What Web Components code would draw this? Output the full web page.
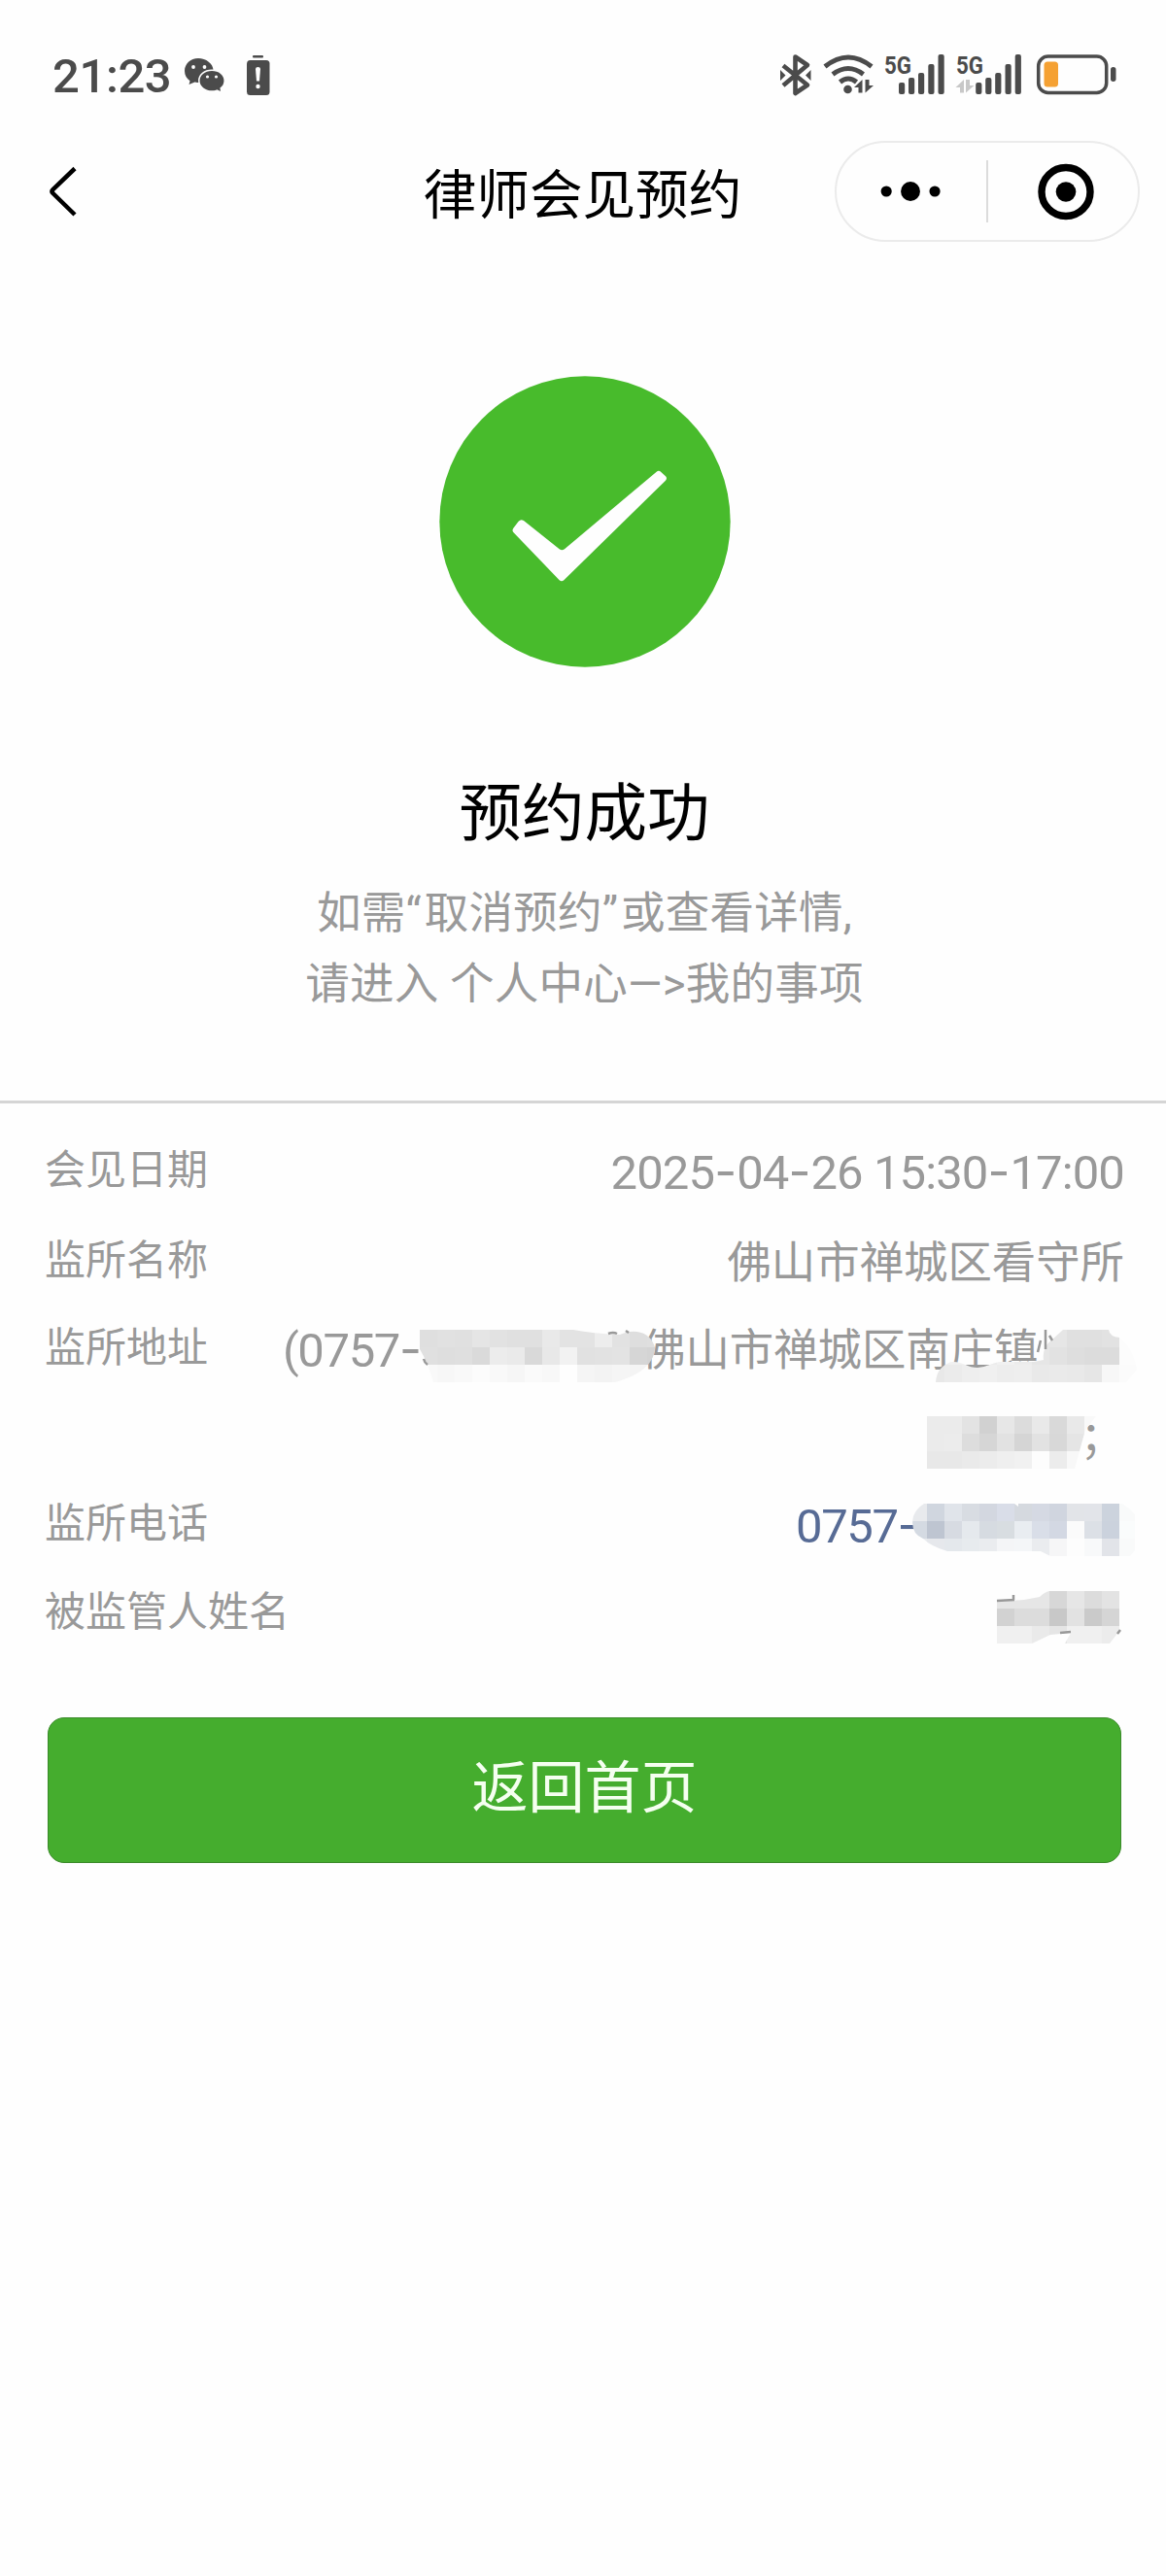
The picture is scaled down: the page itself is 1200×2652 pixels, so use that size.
<!DOCTYPE html>
<html lang="zh-CN">
<head>
<meta charset="utf-8">
<title>律师会见预约</title>
<style>
  body {
    margin: 0;
    background: #fefefe;
    font-family: Roboto, "Noto Sans CJK SC", sans-serif;
  }
</style>
</head>
<body>
<appointment-page></appointment-page>

<script>
/**
 * Phone status bar: clock and notification icons left, radio and battery icons right.
 */
class StatusBar extends HTMLElement {
  constructor() {
    super();
    this.attachShadow({ mode: "open" });
  }

  connectedCallback() {
    this.shadowRoot.innerHTML = `
      <style>
        :host {
          display: flex;
          justify-content: space-between;
          box-sizing: border-box;
          height: 130px;
          padding: 50px 50px 0 54px;
          color: #4b4b4b;
        }
        .left { display: flex; height: 54px; }
        time { width: 136px; font-size: 49px; font-weight: 500; line-height: 57px; letter-spacing: -.4px; }
        svg { display: block; height: 54px; }
      </style>
      <div class="left">
        <time>21:23</time>
        <svg width="90" viewBox="190 50 90 54" fill="currentColor">
          <path d="M204 60c-8 0-14 5.700-14 13 0 4.500 2.200 8 5.500 10.300L194.500 87l6-2.600c1.500.4 3.500.6 5 .6 8.500 0 14-5.500 14-12.500S212 60 204 60z"/>
          <path d="M218 72.300c-7.600 0-13.200 4.700-13.200 10.700S210.400 94 218 94c1.800 0 3.600-.3 5.200-.9l4.800 2-.8-4.200c2.600-2 4-4.800 4-8 0-6-5.600-10.600-13.200-10.600z" stroke="#fefefe" stroke-width="1.500"/>
          <g fill="#fefefe"><circle cx="199" cy="69" r="1.900"/><circle cx="210.500" cy="69" r="1.900"/><circle cx="213.500" cy="79" r="1.600"/><circle cx="222.500" cy="79" r="1.600"/></g>
          <rect x="260" y="57" width="11" height="2.600" rx="1"/>
          <rect x="254" y="62" width="23.500" height="36" rx="3.500"/>
          <path d="M263 71q0-2 2.500-2t2.500 2l-1 12.500h-3z" fill="#fefefe"/>
          <circle cx="265.500" cy="89" r="2.200" fill="#fefefe"/>
        </svg>
      </div>
      <svg width="350" viewBox="800 50 350 54" fill="currentColor">
        <path d="M806 67.500l25 20-12.500 8.500V58.500l12.500 8.500-25 21" fill="none" stroke="currentColor" stroke-width="4.600" stroke-linejoin="round"/>
        <path d="M803 72v11l5.500-5.500zM834.500 72v11l-5.500-5.500z"/>
        <g fill="none" stroke="currentColor" stroke-width="4.900">
          <path d="M849 68.500Q873 49.500 897 68.500"/>
          <path d="M857 76.500Q873 64.500 888.500 76.500"/>
          <path d="M864.500 84.500Q873 77.500 881.500 84.500"/>
        </g>
        <circle cx="872.500" cy="92" r="4.300"/>
        <path d="M879 90l8.500-8v13.500h-4v-5.500zM890.500 82h4v6h4.500l-8.500 7.500z"/>
        <g font-family="Roboto" font-weight="700" font-size="26.500">
          <text x="910" y="76" textLength="28" lengthAdjust="spacingAndGlyphs">5G</text>
          <text x="984" y="76" textLength="28" lengthAdjust="spacingAndGlyphs">5G</text>
        </g>
        <g id="bars">
          <rect x="925" y="85" width="6.200" height="12" rx="2"/>
          <rect x="935" y="80" width="6.200" height="17" rx="2"/>
          <rect x="945" y="75" width="6.200" height="22" rx="2"/>
          <rect x="955.300" y="66" width="6.200" height="31" rx="2"/>
          <rect x="965.500" y="56" width="6.200" height="41" rx="2"/>
        </g>
        <use href="#bars" x="79.200"/>
        <path d="M983.500 90l8.500-8v13.500h-4v-5.500zM994 82h4v6h4.500l-8.500 7.500z" fill="#c8c8c8"/>
        <rect x="1068.700" y="58" width="70" height="37.500" rx="10" fill="none" stroke="currentColor" stroke-width="3.500"/>
        <rect x="1074.500" y="63.500" width="14.500" height="26" rx="3.500" fill="#f5a133"/>
        <rect x="1143" y="69" width="5.500" height="15" rx="2.700"/>
      </svg>
    `;
  }
}
customElements.define("status-bar", StatusBar);

/**
 * Navigation bar with back arrow, slotted title and the mini program capsule.
 */
class NavBar extends HTMLElement {
  constructor() {
    super();
    this.attachShadow({ mode: "open" });
  }

  connectedCallback() {
    this.shadowRoot.innerHTML = `
      <style>
        :host {
          display: grid;
          grid-template-columns: 1fr auto 1fr;
          align-items: center;
          height: 134px;
          padding: 0 27px 0 48px;
        }
        .back { display: block; }
        h1 {
          margin: 0 11px 0 -11px;
          padding-top: 7px;
          font-size: 54.600px;
          font-weight: 400;
          line-height: 80px;
          color: #000;
        }
        .capsule {
          display: flex;
          align-items: center;
          justify-self: end;
          box-sizing: border-box;
          width: 314px;
          height: 104px;
          border: 2px solid #ebebeb;
          border-radius: 52px;
        }
        .capsule svg { flex: 1; height: 64px; }
        .capsule i { width: 2px; height: 64px; background: #dcdcdc; }
      </style>
      <svg class="back" width="32" height="54" viewBox="48 170 32 54">
        <path d="M77 173.500L54.500 195q-2 2 0 4L77 221" fill="none" stroke="#000" stroke-width="4.500"/>
      </svg>
      <h1><slot></slot></h1>
      <div class="capsule">
        <svg viewBox="861 165 155 64">
          <circle cx="912.500" cy="197" r="5.600"/><circle cx="937.500" cy="197" r="10"/><circle cx="962.700" cy="197" r="5.600"/>
        </svg>
        <i></i>
        <svg viewBox="1017 165 154 64">
          <circle cx="1097" cy="197.500" r="25" fill="none" stroke="#000" stroke-width="7.400"/>
          <circle cx="1097" cy="197.500" r="10.300"/>
        </svg>
      </div>
    `;
  }
}
customElements.define("nav-bar", NavBar);

/**
 * Success badge with a heading and slotted hint lines.
 */
class ResultPanel extends HTMLElement {
  constructor() {
    super();
    this.attachShadow({ mode: "open" });
  }

  connectedCallback() {
    this.shadowRoot.innerHTML = `
      <style>
        :host {
          display: flex;
          flex-direction: column;
          align-items: center;
          box-sizing: border-box;
          height: 872px;
          padding: 122.500px 0 0 3px;
          border-bottom: 3px solid #d5d5d5;
          text-align: center;
        }
        svg { display: block; flex: none; }
        h2 {
          margin: 103px 0 0;
          font-size: 64.500px;
          font-weight: 400;
          line-height: 96px;
          color: #000;
        }
        .hint {
          margin-top: 18px;
          font-size: 45.500px;
          line-height: 73px;
          letter-spacing: .25px;
          color: #999;
        }
      </style>
      <svg width="300" height="300" viewBox="65 49 900 900">
        <circle cx="515" cy="499" r="449" fill="#48bb2c"/>
        <path d="M310 498q7-8 16-2l110 88q8 6 16 0L736 345q7-6 14 1l14 13q6 6 0 13L450 680q-7 6-14 0L294 532q-5-6 0-13z" fill="#fefefe"/>
      </svg>
      <h2>${this.getAttribute("heading")}</h2>
      <div class="hint"><slot></slot></div>
    `;
  }
}
customElements.define("result-panel", ResultPanel);

/**
 * Pixelated cover for private data.
 * "cells" holds rows of colours split by "/", "shape" is the outline in pixels.
 */
class PixelMosaic extends HTMLElement {
  constructor() {
    super();
    this.attachShadow({ mode: "open" });
  }

  connectedCallback() {
    const size = 18;
    const rows = this.getAttribute("cells").split("/").map((row) => row.trim().split(" "));
    const width = Math.max(...rows.map((row) => row.length)) * size;
    const rects = rows.map((row, y) => row.map((c, x) => {
      const color = c.length === 2 ? c.repeat(3) : c;
      return `<rect x="${x * size}" y="${y * size}" width="${size}" height="${size}" fill="#${color}"/>`;
    }).join("")).join("");
    this.shadowRoot.innerHTML = `
      <style>
        :host { display: block; }
        svg { display: block; overflow: visible; }
      </style>
      <svg width="${width}" height="${rows.length * size}" shape-rendering="crispEdges">
        <clipPath id="shape"><path d="${this.getAttribute("shape")}"/></clipPath>
        <g clip-path="url(#shape)">${rects}</g>
        <path d="${this.getAttribute("strokes") || ""}" fill="none" stroke="#999" stroke-width="2.500" shape-rendering="auto"/>
      </svg>
    `;
  }
}
customElements.define("pixel-mosaic", PixelMosaic);

/**
 * One label and value line of the appointment details.
 */
class DetailRow extends HTMLElement {
  constructor() {
    super();
    this.attachShadow({ mode: "open" });
  }

  connectedCallback() {
    this.shadowRoot.innerHTML = `
      <style>
        :host {
          display: flex;
          justify-content: space-between;
          line-height: 90.800px;
          color: #999;
        }
        .label { font-size: 42px; white-space: nowrap; }
        .value {
          display: flex;
          flex-direction: column;
          align-items: flex-end;
          padding-top: 3px;
          margin-bottom: -3px;
          font-size: 45.400px;
          white-space: nowrap;
        }
      </style>
      <div class="label">${this.getAttribute("label")}</div>
      <div class="value"><slot></slot></div>
    `;
  }
}
customElements.define("detail-row", DetailRow);

/**
 * Large green button.
 */
class PrimaryButton extends HTMLElement {
  constructor() {
    super();
    this.attachShadow({ mode: "open" });
  }

  connectedCallback() {
    this.shadowRoot.innerHTML = `
      <style>
        :host { display: block; }
        button {
          display: block;
          box-sizing: border-box;
          width: 100%;
          height: 150px;
          padding: 0 0 4px;
          border: 1px solid #3b8a2b;
          border-radius: 17px;
          background: #45ad2e;
          color: #f5fff0;
          font: 400 58px/88px Roboto, "Noto Sans CJK SC", sans-serif;
        }
      </style>
      <button type="button"><slot></slot></button>
    `;
  }
}
customElements.define("primary-button", PrimaryButton);

/**
 * Whole page.
 */
class AppointmentPage extends HTMLElement {
  constructor() {
    super();
    this.attachShadow({ mode: "open" });
  }

  connectedCallback() {
    this.shadowRoot.innerHTML = `
      <style>
        :host { display: block; min-height: 2652px; }
        .quote { letter-spacing: 3px; }
        .details { padding: 24px 43px 0 46px; }
        .num { margin: -2px 0 2px; font-size: 49px; letter-spacing: -1.400px; }
        .num b { font-family: Inter; font-weight: 400; font-size: 50px; letter-spacing: 0; }
        .date { letter-spacing: -.900px; }
        .line { display: flex; position: relative; height: 90.800px; }
        .address { margin-top: -1px; }
        .tel { color: #576b95; }
        pixel-mosaic { position: absolute; }
        primary-button { margin: 62px 46px 0 49px; }
      </style>
      <status-bar></status-bar>
      <nav-bar>律师会见预约</nav-bar>
      <result-panel heading="预约成功">如需<span class="quote">“</span>取消预约<span class="quote">”</span>或查看详情,<br>请进入 个人中心—&gt;我的事项</result-panel>
      <section class="details">
        <detail-row label="会见日期"><span class="num date">2025<b>-</b>04<b>-</b>26 15:30<b>-</b>17:00</span></detail-row>
        <detail-row label="监所名称">佛山市禅城区看守所</detail-row>
        <detail-row class="address" label="监所地址">
          <div class="line" style="width: 866px">
            <span class="num" style="width: 369px">(0757<b>-</b></span>
            <span>佛山市禅城区南庄镇</span>
            <pixel-mosaic style="left: 141px; top: 23px"
              cells="df e1 e0 e5 e2 e0 e0 e9 e3 e3 ed e2 de df/e0 de df da ec ea d9 e8 f2 e1 e2 e3 d6 d4/f9 f7 f9 fc f9 f6 fa f8 fe f5 f3 f5 f4 f3"
              shape="M0 0H158Q178 4 206 5C218-1 237 0 242 18C242 38 220 49 201 54H14Q8 33 0 20Z"
              strokes="M4 30Q5 34 8 36M194 4Q199 2 203 4M215 3l-3-2"></pixel-mosaic>
            <pixel-mosaic style="left: 663px; top: 23px"
              cells="fe fe fe fe fe fe e6 e6 e0 e0 e2 fc/fe f1 f1 ec f1 ec e6 e2 de dc dc fc/e8 eb ee f0 ed ee e9 ea e9 e6 f7 fb"
              shape="M9 54Q10 38 25 33C36 32 42 39 52 39C64 38 68 33 78 33L110 33L120 31Q118 18 129 10L140 0H187Q188 7 198 8Q212 18 216 41L205 54Z"
              strokes="M122 0V20M117 11L114 23M126 6L129 11"></pixel-mosaic>
          </div>
          <div class="line">
            <span>；</span>
            <pixel-mosaic style="right: 23px; top: 22px"
              cells="eb eb e3 d1 e7 dc e9 d9 e9 f9/eb ec dd d6 e2 d5 e2 d8 e5 fc/e8 e8 ea ec ef f1 fd ec f8 fe"
              shape="M0 0H174L163 14L152 54H0Z"></pixel-mosaic>
          </div>
        </detail-row>
        <detail-row label="监所电话">
          <div class="line tel" style="width: 338px">
            <span class="num">0757<b>-</b></span>
            <pixel-mosaic style="left: 117px; top: 21px"
              cells="e8eaed d0d6df e0e4ea d8dce2 d3d7e0 d9dde8 d5d9df d5d9e3 d0d5df e2e4e8 e2e4e9 ccd3dd f9fafa/d4dae2 bec5d1 d7dbe2 e5e9ed d6dbe1 d8dde1 e9edf1 d9dee8 d3d8e3 fbfbfb dce0e6 cbd2dd fafcfc/e9ecef e6e8ec e4e8ec e7ebee eaecef f4f5f7 f4f6f8 eaecef f6f6f7 fdfdfd f8f9fa e2e4e9 f9fafa"
              shape="M15 0H108L112 3V0H219Q226 4 232 11V48L227 54H145L135 49H39Q22 44 14 36Q0 30 4 13Q7 5 15 0Z"></pixel-mosaic>
          </div>
        </detail-row>
        <detail-row label="被监管人姓名">
          <div class="line" style="width: 131px">
            <pixel-mosaic style="left: 0; top: 20px"
              cells="e6 e6 e6 d7 e6 dc e3/d2 dc dc c8 e2 ca d5/f0 f0 ea e5 f0 f0 ec"
              shape="M0 11L28 9L44 6Q49 1 54 0H126V41L116 54H70L76 43L55 45L36 54H0Z"
              strokes="M0 10L18 9M17 4V9M65 43L76 42M124 44L127 40"></pixel-mosaic>
          </div>
        </detail-row>
      </section>
      <primary-button>返回首页</primary-button>
    `;
  }
}
customElements.define("appointment-page", AppointmentPage);
</script>
</body>
</html>
